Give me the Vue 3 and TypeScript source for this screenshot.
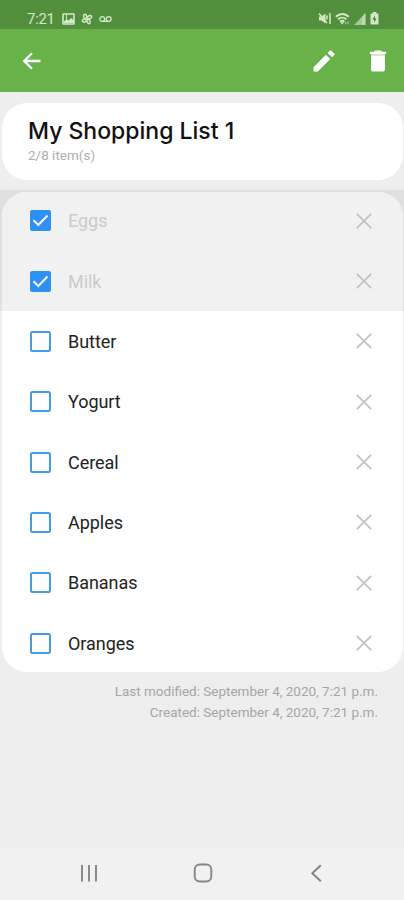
<script setup lang="ts">
import { ref } from 'vue'

interface Item {
  name: string
  done: boolean
}

const items = ref<Item[]>([
  { name: 'Eggs', done: true },
  { name: 'Milk', done: true },
  { name: 'Butter', done: false },
  { name: 'Yogurt', done: false },
  { name: 'Cereal', done: false },
  { name: 'Apples', done: false },
  { name: 'Bananas', done: false },
  { name: 'Oranges', done: false },
])

const stamp = 'September 4, 2020, 7:21 p.m.'

function remove(index: number) {
  items.value.splice(index, 1)
}
</script>

<template>
  <div class="screen">
    <div class="status">
      <span class="clock">7:21</span>
      <svg class="s-image" width="13" height="12" viewBox="0 0 13 12">
        <rect x="1" y="1" width="11" height="10" rx="0.5" fill="none" stroke="currentColor" stroke-width="1.6" />
        <path d="M2 10V8.500L4.500 6l2 1.500L9 5l3 2.500V10z" fill="currentColor" />
        <path d="M4.500 2v4" stroke="currentColor" stroke-width="1" />
      </svg>
      <svg class="s-fan" width="12" height="12" viewBox="0 0 12 12" fill="none" stroke="currentColor" stroke-width="1.5">
        <ellipse cx="4.200" cy="3.400" rx="1.500" ry="2.100" transform="rotate(-20 4.200 3.400)" />
        <ellipse cx="8.600" cy="4.200" rx="2.100" ry="1.500" transform="rotate(-20 8.600 4.200)" />
        <ellipse cx="7.600" cy="8.600" rx="1.500" ry="2.100" transform="rotate(-20 7.600 8.600)" />
        <ellipse cx="3.400" cy="7.600" rx="2.100" ry="1.500" transform="rotate(-20 3.400 7.600)" />
      </svg>
      <svg class="s-voice" width="13" height="8" viewBox="0 0 13 8" fill="none" stroke="currentColor" stroke-width="1.3">
        <circle cx="3.300" cy="4" r="2.400" />
        <circle cx="9.700" cy="4" r="2.400" />
        <path d="M3.300 6.400h6.400" />
      </svg>
      <span class="grow"></span>
      <svg class="s-mute" width="13" height="13" viewBox="0 0 13 13">
        <path d="M1 4.500h2.500L7.500 1.500v10L3.500 8.500H1z" fill="currentColor" />
        <path d="M1 1.500 9 11M9 3.500v4M12 1v11" fill="none" stroke="currentColor" stroke-width="1.500" />
      </svg>
      <svg class="s-wifi" width="15" height="12" viewBox="0 0 15 12" fill="none" stroke="currentColor">
        <path d="M.8 3.800c3.800-3.700 9.200-3.700 13 0M3 6.300c2.500-2.300 6-2.300 8.500 0M5 8.600c1.400-1.200 3-1.200 4.300 0" stroke-width="1.900" />
        <path d="M7.200 11.500 5.200 9.200h4z" fill="currentColor" stroke="none" />
        <path d="M10.700 11.300V8.700M13 8.500V11" stroke-width="1.100" opacity=".7" />
      </svg>
      <svg class="s-signal" width="12" height="12" viewBox="0 0 12 12">
        <path d="M0 12 11.500 0v12z" fill="currentColor" opacity="0.650" />
        <path d="M8 3.700 11.500 0v12H8z" fill="currentColor" opacity="0.500" />
      </svg>
      <svg class="s-battery" width="9" height="13" viewBox="0 0 9 13">
        <path d="M2.700 0h3.600v1.500H7.500q1 0 1 1V11.500q0 1-1 1h-6q-1 0-1-1v-9q0-1 1-1h1.200z" fill="currentColor" />
        <path d="M5 3.500 2.500 7.500h1.700L3.900 10.700 6.500 6.500H4.800z" fill="#3f7430" />
      </svg>
    </div>

    <header class="bar">
      <svg class="back" width="20" height="20" viewBox="0 0 20 20" fill="none" stroke="#fff" stroke-width="2.300">
        <path d="M18.500 10H2.500M10 2.200 2.200 10l7.800 7.800" />
      </svg>
      <span class="grow"></span>
      <svg class="edit" width="28" height="28" viewBox="0 0 24 24" fill="#fff">
        <path d="M3 17.250V21h3.750L17.400 10.350l-3.750-3.750zM20.710 7.040a1 1 0 0 0 0-1.410l-2.340-2.340a1 1 0 0 0-1.410 0l-1.830 1.830 3.750 3.750z" />
      </svg>
      <svg class="trash" width="28" height="28" viewBox="0 0 24 24" fill="#fff">
        <path d="M6 19c0 1.100.9 2 2 2h8c1.100 0 2-.9 2-2V7H6zM19 4h-3.500l-1-1h-5l-1 1H5v2h14z" />
        <path d="M6 6.500h12" stroke="#d3e8ca" stroke-width="1" />
      </svg>
    </header>

    <main class="content">
      <section class="title-card">
        <h1>My Shopping List 1</h1>
        <p>2/8 item(s)</p>
      </section>

      <div class="list-wrap">
        <ul class="list">
          <li v-for="(item, i) in items" :key="item.name" :class="['row', { done: item.done }]">
            <svg class="box" width="21" height="21" viewBox="0 0 21 21" @click="item.done = !item.done">
              <template v-if="item.done">
                <rect width="21" height="21" rx="2" fill="#2e90f5" />
                <path d="M3.500 10.300 8.300 15 17.500 5.500" fill="none" stroke="#f4f8fc" stroke-width="2.100" />
              </template>
              <rect v-else x="1" y="1" width="19" height="19" rx="1.500" fill="none" stroke="#459ce3" stroke-width="2" />
            </svg>
            <span class="name">{{ item.name }}</span>
            <svg class="cross" width="16" height="16" viewBox="0 0 16 16" @click="remove(i)">
              <path d="M.8.8 15.200 15.200M15.200.8.8 15.200" stroke="#c3c3c3" stroke-width="1.800" />
            </svg>
          </li>
        </ul>
      </div>

      <footer class="meta">
        <div class="modified">Last modified: {{ stamp }}</div>
        <div class="created">Created: {{ stamp }}</div>
      </footer>
    </main>

    <nav class="nav">
      <svg width="18" height="18" viewBox="0 0 18 18" stroke="#858585" stroke-width="1.900">
        <path d="M2 1v16.500M9 1v16.500M16 1v16.500" />
      </svg>
      <svg width="20" height="20" viewBox="0 0 20 20" fill="none" stroke="#858585" stroke-width="1.900">
        <rect x="1.700" y="1.500" width="16.600" height="17" rx="5" />
      </svg>
      <svg width="18" height="18" viewBox="0 0 18 18" fill="none" stroke="#808080" stroke-width="1.900">
        <path d="M12.800 1.300 4.300 9.300 12.800 17.200" />
      </svg>
    </nav>
  </div>
</template>

<style>
body {
  margin: 0;
  background: #ededed;
}
</style>

<style scoped>
.screen {
  display: flex;
  flex-direction: column;
  width: 404px;
  height: 900px;
  overflow: hidden;
  background: #eee;
  font-family: Roboto, 'Liberation Sans', sans-serif;
}
.screen svg {
  flex: none;
  display: block;
}
.grow {
  flex: 1;
}
.status {
  box-sizing: border-box;
  display: flex;
  align-items: center;
  height: 29px;
  padding: 8px 25px 0 27px;
  background: #528f3c;
  color: #d3e8c6;
}
.clock {
  width: 35px;
  font-size: 15px;
  line-height: 20px;
  letter-spacing: -0.300px;
}
.s-fan { margin-left: 6px; }
.s-voice { margin-left: 6px; }
.s-wifi { margin-left: 4px; }
.s-signal { margin-left: 4px; }
.s-battery { margin-left: 4px; }
.bar {
  box-sizing: border-box;
  display: flex;
  align-items: center;
  height: 63px;
  padding: 1px 12px 0 22px;
  background: #67b34a;
}
.edit { margin-right: 26px; }
.content {
  flex: 1;
  padding-top: 11px;
}
.title-card {
  box-sizing: border-box;
  height: 77px;
  margin: 0 1px 0 2px;
  padding: 13px 26px 0;
  border-radius: 25px;
  background: #fff;
}
h1 {
  margin: 0;
  font: 500 23px/30px Inter, sans-serif;
  color: #111;
  white-space: nowrap;
}
.title-card p {
  margin: 0;
  font-size: 13.500px;
  line-height: 18px;
  color: #adadad;
}
.list-wrap {
  margin-top: 10px;
  padding: 2px 1px 0 2px;
  background: linear-gradient(#e0e0e0 0 121px, #eee 121px);
}
.list {
  height: 480px;
  margin: 0;
  padding: 0;
  overflow: hidden;
  border-radius: 25px;
  background: #fff;
  list-style: none;
}
.row {
  box-sizing: border-box;
  display: flex;
  align-items: center;
  height: 60.350px;
  padding: 0 31px 0 28px;
}
.row:first-child {
  margin-top: -1.500px;
}
.done {
  background: #f1f1f1;
}
.name {
  flex: 1;
  margin-left: 17px;
  padding-top: 1px;
  font-size: 18px;
  line-height: 24px;
  letter-spacing: -0.050px;
  color: #222;
}
.done .name {
  color: #cbcbcb;
}
.meta {
  padding: 9px 26px 0 0;
  font-size: 13.500px;
  line-height: 21px;
  text-align: right;
  color: #a5a5a5;
}
.nav {
  box-sizing: border-box;
  display: flex;
  align-items: center;
  justify-content: space-between;
  height: 52px;
  padding: 0 78px 2px 80px;
  background: #f1f1f1;
}
</style>
